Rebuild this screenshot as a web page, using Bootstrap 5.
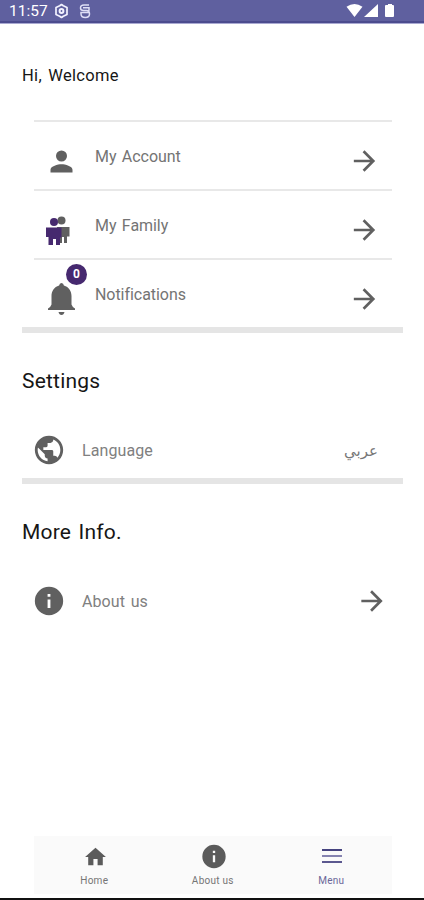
<!DOCTYPE html>
<html lang="en">
<head>
<meta charset="utf-8">
<meta name="viewport" content="width=device-width, initial-scale=1">
<title>Menu</title>
<link href="https://cdn.jsdelivr.net/npm/bootstrap@5.3.0/dist/css/bootstrap.min.css" rel="stylesheet">
<style>
body{font-family:Roboto,"Noto Sans",sans-serif;color:#161616;height:900px;overflow:hidden}
svg{display:block;flex:none}
.screen{height:900px;border-bottom:2px solid #111}
.status{height:24px;background:#5f609f;border-bottom:1px solid #a9a9d2;box-shadow:inset 0 -2px #4c4c8e;color:#fff;padding:0 28px 1px 9px}
.clock{font-size:15.5px;line-height:22px;width:38px;margin-right:7px;white-space:nowrap}
.hello{font-size:16.5px;line-height:20px;letter-spacing:.3px;word-spacing:2px;padding:42px 0 0 22px;height:96px}
.rows{margin:0 32px 0 34px}
.item{height:69px;border-top:2px solid #e8e8e8;padding:12px 11px 0 11px;color:#606060}
.pic{width:34px;height:54px}
.lbl{font-size:16px;line-height:20px;letter-spacing:-.05px;word-spacing:1.5px;color:#747474}
.item .lbl{margin:-10px 0 0 16px}
.item .lbl+svg{margin-top:-2px}
.bar{height:6px;background:#e5e5e5;margin:0 21px 0 22px}
.title{font-size:21px;line-height:26px;letter-spacing:.2px;word-spacing:2px;margin:0 0 0 22px;padding-top:35px;font-weight:400}
.single{height:34px;margin:39px 0 11px;padding:0 36px 0 32px;color:#606060}
.single .lbl{margin-left:16px;padding-top:2px;color:#808080;letter-spacing:.1px}
.ar{font-family:"Noto Sans","DejaVu Sans",sans-serif;font-size:15px;line-height:24px;color:#777;margin-right:10px}
.count{left:21px;top:-9px;width:21px;height:21px;background:#46296f;color:#fff;font-size:12px}
.tabs{height:58px;margin:0 32px 4px 34px;background:#fafafa;color:#757575;font-size:10px;line-height:12px;letter-spacing:.25px}
.tab{width:118.5px;padding:6px 0 0 2px}
.tab svg{height:29px;margin-left:2px}
.tab span{margin-top:4px}
.active-tab{color:#6a6799}
</style>
<script src="https://cdn.jsdelivr.net/npm/bootstrap@5.3.0/dist/js/bootstrap.bundle.min.js"></script>
</head>
<body class="bg-white m-0">
<svg width="0" height="0" class="position-absolute" aria-hidden="true">
<symbol id="arrow" viewBox="0 0 24 24"><path fill="currentColor" d="M12 4l-1.410 1.410L16.170 11H4v2h12.170l-5.580 5.590L12 20l8-8z"/></symbol>
<symbol id="info" viewBox="0 0 24 24"><path fill="currentColor" d="M12 2a10 10 0 100 20 10 10 0 000-20zm1 15h-2v-6h2zm0-8h-2V7h2z"/></symbol>
</svg>
<div class="screen d-flex flex-column">
<header class="status d-flex align-items-center">
<span class="clock">11:57</span>
<svg width="15" height="16" viewBox="0 0 15 16" fill="none" stroke="#f2f2ff"><path d="M7.500 1.500l1.800 1.300 3.700 1.700v7L9.300 13.200 7.500 14.500l-1.800-1.300L2 11.500v-7l3.700-1.700z" stroke-width="1.700" stroke-linejoin="round"/><circle cx="7.500" cy="8" r="1.900" stroke-width="2"/></svg>
<svg class="ms-2" width="15" height="16" viewBox="0 0 15 16" fill="none" stroke="#dedef6" stroke-width="1.500"><path d="M12 2H7Q3.500 2 3.500 5q0 2.500 3 2.500h3Q12.500 7.500 12.500 11q0 3.500-4.200 3.500T4 11V9.500h8M6 4.800h6v3"/></svg>
<svg class="ms-auto" width="50" height="16" viewBox="0 0 50 16" fill="#fff"><path d="M.5 3.700Q8.500-1.500 16.500 3.700L8.500 14zM32 1v13H18zM40 2h2V1h4v1h1q1 0 1 1v10q0 1-1 1h-7q-1 0-1-1V3q0-1 1-1z"/></svg>
</header>
<div class="hello">Hi, Welcome</div>
<main class="flex-grow-1">
<div class="rows">
<div class="item d-flex align-items-center">
<div class="pic d-flex align-items-center"><svg width="33" height="33" viewBox="0 0 24 24" fill="currentColor"><path d="M12 12a4 4 0 100-8 4 4 0 000 8zm0 2c-2.670 0-8 1.340-8 4v2h16v-2c0-2.660-5.330-4-8-4z"/></svg></div>
<span class="lbl">My Account</span><svg class="ms-auto" width="33" height="32"><use href="#arrow"/></svg></div>
<div class="item d-flex align-items-center">
<div class="pic d-flex align-items-center"><svg width="33" height="33" viewBox="0 0 33 33"><g fill="#5f5f5f"><circle cx="16.500" cy="6.500" r="4"/><path d="M12 13h12.500v9.500H22V29h-3v-6h-2v6h-3z"/></g><g fill="#46296f"><circle cx="9" cy="8" r="4"/><path d="M1 13.500h15.500v10H15V31h-4v-6H8v6H3.500v-8H1z"/></g></svg></div>
<span class="lbl">My Family</span><svg class="ms-auto" width="33" height="32"><use href="#arrow"/></svg></div>
<div class="item d-flex align-items-center">
<div class="pic d-flex align-items-center position-relative"><svg width="33" height="40" viewBox="0 1 33 40" fill="currentColor"><path d="M16.500 4q2 0 2.400 2.500c5 1.500 7.600 5.500 7.600 10.500v8.500q.5 2 3.500 4V31H3v-1.500q3-2 3.500-4V17c0-5 2.600-9 7.600-10.500Q14.500 4 16.500 4zM13.500 33h6q-.7 3-3 3t-3-3z"/></svg><b class="count position-absolute rounded-circle d-flex align-items-center justify-content-center">0</b></div>
<span class="lbl">Notifications</span><svg class="ms-auto" width="33" height="32"><use href="#arrow"/></svg></div>
</div>
<div class="bar"></div>
<h2 class="title">Settings</h2>
<div class="single d-flex align-items-center"><svg width="34" height="34" viewBox="0 0 24 24" fill="currentColor"><path d="M12 2C6.480 2 2 6.480 2 12s4.480 10 10 10 10-4.480 10-10S17.520 2 12 2zm-1 17.930c-3.950-.49-7-3.850-7-7.930 0-.62.080-1.210.210-1.790L9 15v1c0 1.100.9 2 2 2v1.930zm6.900-2.540c-.26-.81-1-1.390-1.900-1.390h-1v-3c0-.55-.45-1-1-1H8v-2h2c.55 0 1-.45 1-1V7h2c1.100 0 2-.9 2-2v-.41c2.930 1.190 5 4.060 5 7.410 0 2.080-.8 3.970-2.100 5.390z"/></svg><span class="lbl">Language</span><span class="ar ms-auto" lang="ar" dir="rtl">عربي</span></div>
<div class="bar"></div>
<h2 class="title">More Info.</h2>
<div class="single d-flex align-items-center"><svg width="34" height="34"><use href="#info"/></svg><span class="lbl">About us</span><svg class="ms-auto" width="32" height="32"><use href="#arrow"/></svg></div>
</main>
<nav class="tabs d-flex">
<div class="tab d-flex flex-column align-items-center"><svg width="25" viewBox="0 0 24 24" fill="#5b5b5b"><path d="M10 20.500v-6h4v6h5v-8h3L12 3.500 2 12.500h3v8z"/></svg><span>Home</span></div>
<div class="tab d-flex flex-column align-items-center"><svg width="28" color="#5b5b5b"><use href="#info"/></svg><span>About us</span></div>
<div class="tab active-tab d-flex flex-column align-items-center"><svg width="20" viewBox="0 0 20 29"><path fill="#45437f" d="M0 7h20v2H0z"/><path fill="#8583b0" d="M0 13h20v2H0z"/><path fill="#5b588f" d="M0 19h20v2H0z"/></svg><span>Menu</span></div>
</nav>
</div>
</body>
</html>
